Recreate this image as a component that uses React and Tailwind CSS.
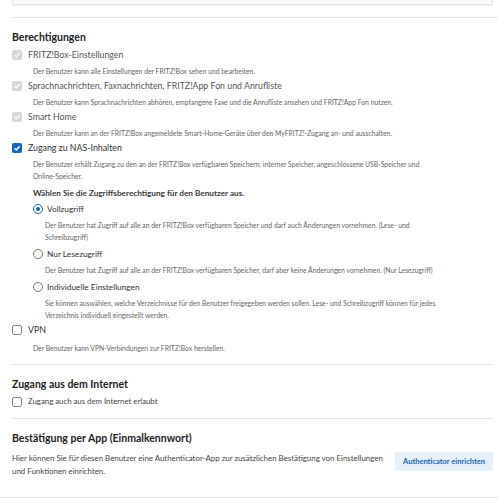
import React from "react";

const F = { fontFamily: "Lato, 'Liberation Sans', sans-serif" };

function Check({ state }) {
  if (state === "disabled")
    return (
      <div className="w-[10px] h-[10px] rounded-[2px] bg-[#d6d6d6] flex items-center justify-center shrink-0">
        <svg width="8" height="8" viewBox="0 0 10 10"><path d="M2 5.2 L4.2 7.3 L8.2 2.8" fill="none" stroke="#fff" strokeWidth="1.6" /></svg>
      </div>
    );
  if (state === "checked")
    return (
      <div className="w-[10px] h-[10px] rounded-[2px] bg-[#1565c0] flex items-center justify-center shrink-0">
        <svg width="8" height="8" viewBox="0 0 10 10"><path d="M2 5.2 L4.2 7.3 L8.2 2.8" fill="none" stroke="#fff" strokeWidth="1.8" /></svg>
      </div>
    );
  return <div className="w-[10px] h-[10px] rounded-[2px] border border-[#888] bg-white shrink-0" />;
}

function Radio({ checked }) {
  return (
    <div className={"w-[10px] h-[10px] rounded-full border flex items-center justify-center shrink-0 " + (checked ? "border-[#1565c0]" : "border-[#777]")}>
      {checked && <div className="w-[4px] h-[4px] rounded-full bg-[#1565c0]" />}
    </div>
  );
}

function Row({ state, label, children, descMt = "mt-[2px]" }) {
  return (
    <div>
      <div className="flex items-center gap-[6px] h-[16px]">
        <Check state={state} />
        <span className={"text-[8.8px] " + (state === "disabled" ? "text-[#555]" : "text-[#333]")}>{label}</span>
      </div>
      <div className={"pl-[21px] text-[6.8px] leading-[12px] text-[#666] " + descMt}>{children}</div>
    </div>
  );
}

function RadioRow({ checked, label, children }) {
  return (
    <div>
      <div className="flex items-center gap-[2px] h-[16px]">
        <Radio checked={checked} />
        <span className="text-[8.3px] text-[#333] ml-[2px]">{label}</span>
      </div>
      <div className="pl-[12px] mt-[2px] text-[6.8px] leading-[12px] text-[#666]">{children}</div>
    </div>
  );
}

export default function App() {
  return (
    <div style={F} className="w-[498px] h-[499px] bg-white overflow-hidden relative">
      <div className="pl-3 pr-[5px]">
        <div className="h-[5px] border border-t-0 border-[#e2e2e2] bg-[#fafafa] rounded-b-[2px] shadow-[0_1px_1px_rgba(0,0,0,0.06)]" />
      </div>
      <div className="ml-3 mt-[12px] border-t border-[#e4e4e4]" />
      <div className="pl-3 pr-[5px]">
        <h2 className="mt-[11px] text-[10.5px] font-bold text-[#222] leading-[16px]">Berechtigungen</h2>
        <div className="mt-[2px] flex flex-col gap-[1px]">
          <Row state="disabled" label="FRITZ!Box-Einstellungen">Der Benutzer kann alle Einstellungen der FRITZ!Box sehen und bearbeiten.</Row>
          <Row state="disabled" label="Sprachnachrichten, Faxnachrichten, FRITZ!App Fon und Anrufliste">Der Benutzer kann Sprachnachrichten abhören, empfangene Faxe und die Anrufliste ansehen und FRITZ!App Fon nutzen.</Row>
          <Row state="disabled" label="Smart Home">Der Benutzer kann an der FRITZ!Box angemeldete Smart-Home-Geräte über den MyFRITZ!-Zugang an- und ausschalten.</Row>
          <Row state="checked" label="Zugang zu NAS-Inhalten">
            Der Benutzer erhält Zugang zu den an der FRITZ!Box verfügbaren Speichern: interner Speicher, angeschlossene USB-Speicher und
            <br />
            Online-Speicher.
          </Row>
        </div>
        <div className="pl-[21px]">
          <div className="mt-[4px] text-[8.2px] font-bold text-[#3a3a3a] leading-[14px]">Wählen Sie die Zugriffsberechtigung für den Benutzer aus.</div>
          <div className="mt-[1px] flex flex-col gap-[3px]">
            <RadioRow checked label="Vollzugriff">
              Der Benutzer hat Zugriff auf alle an der FRITZ!Box verfügbaren Speicher und darf auch Änderungen vornehmen. (Lese- und
              <br />
              Schreibzugriff)
            </RadioRow>
            <RadioRow label="Nur Lesezugriff">Der Benutzer hat Zugriff auf alle an der FRITZ!Box verfügbaren Speicher, darf aber keine Änderungen vornehmen. (Nur Lesezugriff)</RadioRow>
            <RadioRow label="Individuelle Einstellungen">
              Sie können auswählen, welche Verzeichnisse für den Benutzer freigegeben werden sollen. Lese- und Schreibzugriff können für jedes
              <br />
              Verzeichnis individuell eingestellt werden.
            </RadioRow>
          </div>
        </div>
        <div className="mt-[1px]">
          <Row state="empty" label="VPN" descMt="mt-[4px]">Der Benutzer kann VPN-Verbindungen zur FRITZ!Box herstellen.</Row>
        </div>
        <div className="mt-[10px] border-t border-[#e4e4e4]" />
        <h2 className="mt-[11px] text-[10.5px] font-bold text-[#222] leading-[16px]">Zugang aus dem Internet</h2>
        <div className="mt-[2px] flex items-center gap-[6px] h-[16px]">
          <Check state="empty" />
          <span className="text-[7.8px] text-[#444]">Zugang auch aus dem Internet erlaubt</span>
        </div>
        <div className="mt-[8px] border-t border-[#e4e4e4]" />
        <h2 className="mt-[11px] text-[10.5px] font-bold text-[#222] leading-[16px]">Bestätigung per App (Einmalkennwort)</h2>
        <div className="mt-[6px] flex items-start justify-between">
          <div className="text-[7.9px] leading-[13px] text-[#444]">
            Hier können Sie für diesen Benutzer eine Authenticator-App zur zusätzlichen Bestätigung von Einstellungen
            <br />
            und Funktionen einrichten.
          </div>
          <div className="h-[19px] w-[98px] bg-[#e6f0fb] rounded-[2px] flex items-center justify-center text-[7.5px] font-bold text-[#1a63b8] whitespace-nowrap">Authenticator einrichten</div>
        </div>
      </div>
      <div className="absolute left-0 right-0 top-[497px] border-t border-[#e4e4e4]" />
    </div>
  );
}
